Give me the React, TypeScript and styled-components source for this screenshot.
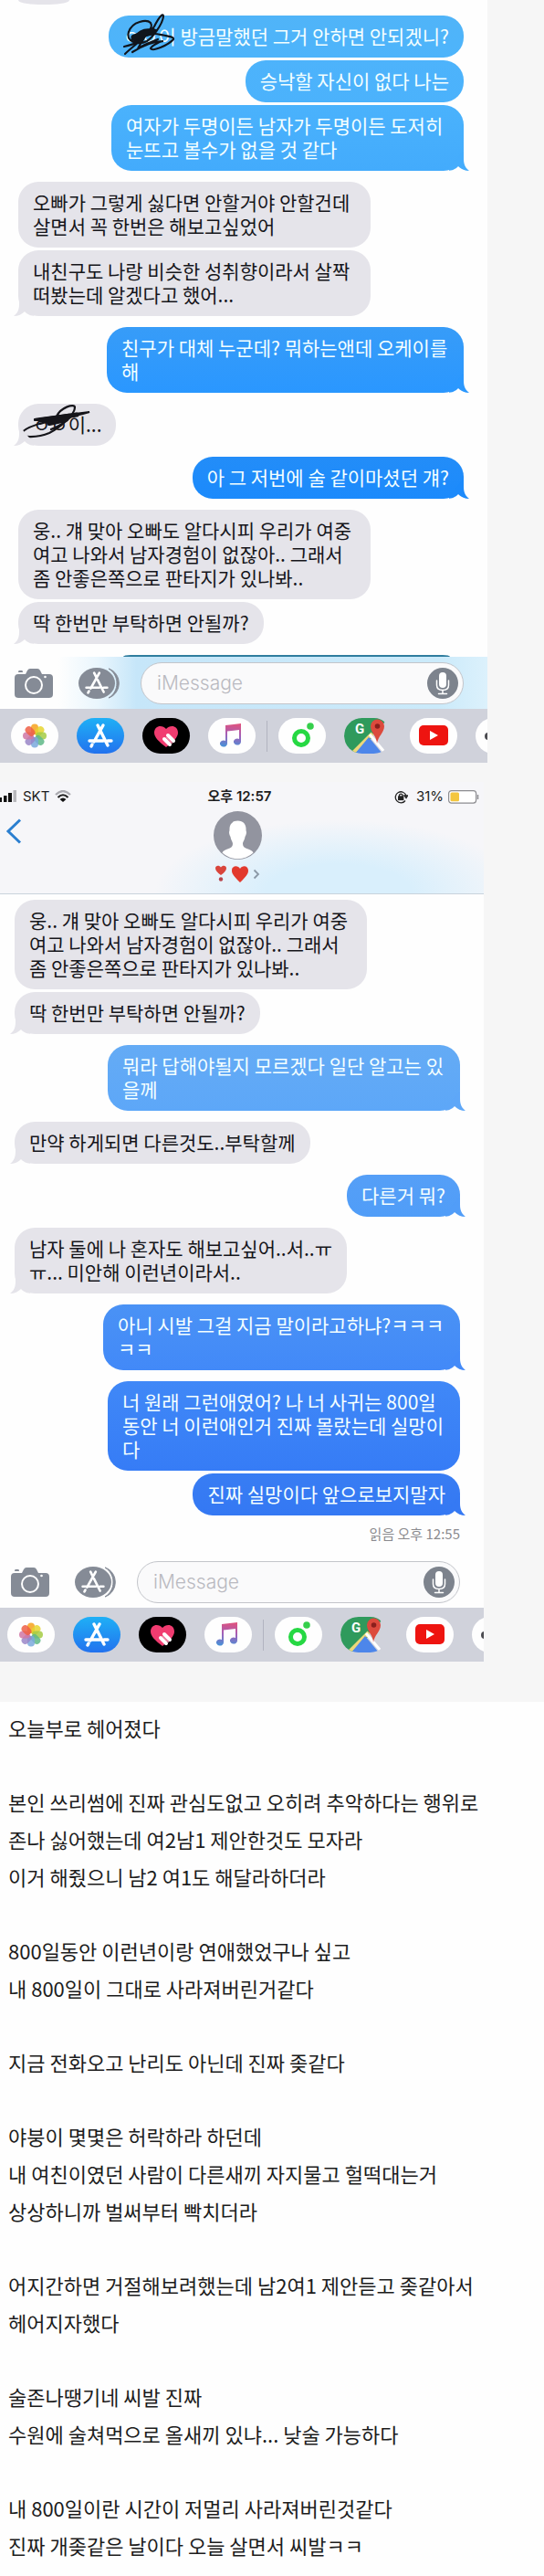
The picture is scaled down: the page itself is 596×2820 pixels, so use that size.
import React from "react";
import styled, { createGlobalStyle } from "styled-components";

const GlobalStyle = createGlobalStyle`
  * { box-sizing: border-box; }
  body { margin: 0; background: #fefefe; }
  body, button, input { font-family: "Noto Sans CJK KR", "Noto Sans", sans-serif; }
  button { border: 0; padding: 0; background: none; display: block; flex: none; }
  svg { display: block; }
`;

const Gallery = styled.section`
  display: flex;
  flex-direction: column;
  gap: 21px;
  padding-bottom: 44px;
  background: #f6f6f6;
`;

const Phone = styled.div<{ $margin: number }>`
  width: calc(100% - ${(p) => p.$margin}px);
  background: #fefefe;
  overflow: hidden;
`;

const Thread = styled.div<{ $top: number; $left: number }>`
  display: flex;
  flex-direction: column;
  align-items: flex-start;
  padding: ${(p) => p.$top}px 26px 0 ${(p) => p.$left}px;
`;

const Group = styled.div<{ $mine?: boolean }>`
  display: flex;
  flex-direction: column;
  gap: 3px;
  align-self: stretch;
  align-items: ${(p) => (p.$mine ? "flex-end" : "flex-start")};
  margin-bottom: 12px;
`;

const Bubble = styled.div<{ $mine?: boolean; $from?: string; $to?: string; $wide?: number }>`
  position: relative;
  min-width: ${(p) => p.$wide ?? 0}px;
  min-height: 46px;
  padding: 9px 16px 11px;
  border-radius: 22px;
  font-size: 21px;
  line-height: 26px;
  white-space: pre-line;
  word-break: keep-all;
  color: ${(p) => (p.$mine ? "#f4ffff" : "#15151a")};
  background: ${(p) => (p.$mine ? `linear-gradient(${p.$from}, ${p.$to})` : "#e5e4ea")};
`;

const TailShape = styled.svg<{ $mine?: boolean }>`
  position: absolute;
  bottom: 0;
  ${(p) => (p.$mine ? "right: -6px;" : "left: -5px; transform: scaleX(-1);")}
`;

const Scribble = styled.svg<{ $x: number; $y: number }>`
  position: absolute;
  left: ${(p) => p.$x}px;
  top: ${(p) => p.$y}px;
`;

const PastEdge = styled.div`
  height: 5px;
  width: 56px;
  margin-bottom: 12px;
  border-radius: 0 0 22px 22px / 0 0 5px 5px;
  background: #e5e4ea;
`;

const NextEdge = styled.div`
  align-self: flex-end;
  width: 358px;
  height: 2px;
  margin-right: 15px;
  border-radius: 8px 8px 0 0 / 2px 2px 0 0;
  background: #2f7d9e;
`;

const Receipt = styled.p`
  align-self: flex-end;
  margin: -2px 0 14px;
  font-size: 15px;
  line-height: 20px;
  color: #8a8a8e;
`;

const Composer = styled.form<{ $tinted?: boolean; $left: number }>`
  display: flex;
  align-items: center;
  height: 57px;
  padding: 0 26px 0 ${(p) => p.$left}px;
  background: ${(p) =>
    p.$tinted
      ? "linear-gradient(90deg, #fefefe 12%, #eaf6fd 20%, #c6e6f9 28%, #cbeafa 90%, #dcf1fc)"
      : "#fefefe"};
`;

const AppToggle = styled.button`
  margin: 0 22px 0 28px;
`;

const Field = styled.label`
  flex: 1;
  min-width: 0;
  display: flex;
  align-items: center;
  height: 46px;
  padding: 0 5px 0 17px;
  border: 1px solid #c3c5ca;
  border-radius: 23px;
  background: #fafafb;
`;

const FieldInput = styled.input`
  flex: 1;
  min-width: 0;
  border: 0;
  padding: 0;
  outline: 0;
  background: none;
  font-family: Inter, sans-serif;
  font-weight: 300;
  font-size: 21px;
  line-height: 26px;
  &::placeholder { color: #b9b9c0; opacity: 1; }
`;

const Drawer = styled.nav<{ $left: number }>`
  display: flex;
  align-items: center;
  gap: 20px;
  height: 59px;
  padding-left: ${(p) => p.$left}px;
  background: #d0d2db;
  overflow: hidden;
`;

const Pill = styled.button<{ $bg?: string }>`
  width: 52px;
  height: 39px;
  border-radius: 20px;
  overflow: hidden;
  background: ${(p) => p.$bg ?? "#fefefe"};
`;

const Divider = styled.span`
  flex: none;
  width: 1px;
  height: 34px;
  margin: 0 -8px;
  background: #b2b4c0;
`;

const Header = styled.header`
  border-bottom: 1px solid #c9d3dc;
  background:
    radial-gradient(ellipse 38% 66% at 70% 100%, #d9effc 40%, #d9effc00),
    #f6f6f9;
`;

const StatusBar = styled.div`
  display: grid;
  grid-template-columns: 1fr auto 1fr;
  align-items: center;
  height: 32px;
  padding-right: 5px;
  font-family: Inter, "Noto Sans CJK KR", sans-serif;
  font-size: 15px;
  line-height: 20px;
  color: #1c1c20;
`;

const Cluster = styled.div<{ $end?: boolean }>`
  display: flex;
  align-items: center;
  gap: ${(p) => (p.$end ? 5 : 6)}px;
  justify-content: ${(p) => (p.$end ? "flex-end" : "flex-start")};
`;

const Clock = styled.time`
  font-size: 15px;
  font-weight: 600;
`;

const TitleBar = styled.div`
  display: grid;
  grid-template-columns: 1fr auto 1fr;
  align-items: start;
  height: 90px;
  padding-right: 10px;
`;

const BackButton = styled.button`
  padding: 8px 0 0 6px;
`;

const Contact = styled.button`
  display: flex;
  flex-direction: column;
  align-items: center;
  gap: 6px;
`;

const Post = styled.article`
  padding: 8px 9px 12px;
  display: flex;
  flex-direction: column;
  gap: 40px;
  font-size: 22px;
  line-height: 41px;
  color: #1c1c1c;
`;

const Paragraph = styled.p`
  margin: 0;
  white-space: pre-line;
`;

const Tail = ({ mine, color = "#e5e4ea" }: { mine?: boolean; color?: string }) => (
  <TailShape $mine={mine} width="22" height="22" viewBox="0 0 22 22" aria-hidden>
    <path
      fill={color}
      d="M16 0V9C16 15 18 19 22 22C17 22 13 20 10 17C7 20 4 22 -4 22L6 12Z"
    />
  </TailShape>
);

const CameraIcon = () => (
  <svg width="42" height="32" viewBox="0 0 42 32">
    <path
      fill="#858b96"
      d="M4 6H12L14 2Q15 0 17 0H25Q27 0 28 2L30 6H38Q42 6 42 10V28Q42 32 38 32H4Q0 32 0 28V10Q0 6 4 6ZM5 2H8Q9 2 9 4H4Q4 2 5 2Z"
    />
    <circle cx="21" cy="18" r="9" fill="none" stroke="#fff" strokeWidth="2" />
    <circle cx="33.500" cy="9" r="1.300" fill="#fff" />
  </svg>
);

const StoreA = ({ stroke = 2.6 }: { stroke?: number }) => (
  <g stroke="#fff" strokeWidth={stroke} strokeLinecap="round" fill="none">
    <path d="M-3-12L8 10M3-12L-7 6M-12 5H3M8 5H12M-9 9L-10 11" />
  </g>
);

const StoreToggleIcon = () => (
  <svg width="46" height="34" viewBox="0 0 46 34">
    <path d="M33 1C48 6 48 28 33 33C45 26 45 8 33 1Z" fill="#858b96" stroke="#858b96" strokeWidth="1" />
    <ellipse cx="20" cy="17" rx="20" ry="17" fill="#858b96" />
    <g transform="translate(20 17) scale(.95)">
      <StoreA stroke={2.8} />
    </g>
  </svg>
);

const MicIcon = () => (
  <svg width="34" height="34" viewBox="0 0 34 34">
    <circle cx="17" cy="17" r="17" fill="#7d838d" />
    <rect x="13" y="5" width="8" height="17" rx="4" fill="#fff" />
    <path d="M10.500 14V19Q10.500 24.500 17 24.500T23.500 19V14M17 25V28M12.500 28.500H21.500" fill="none" stroke="#fff" strokeWidth="1.500" strokeLinecap="round" />
  </svg>
);

const petals = ["#f6a21c", "#e6d52f", "#a5cb44", "#5fb887", "#7aa9dc", "#9a86c8", "#d077a5", "#ee5f45"];

const PhotosIcon = () => (
  <svg width="52" height="39" viewBox="0 0 52 39">
    {petals.map((c, i) => (
      <rect key={c} x="-4" y="-13" width="8" height="12" rx="4" fill={c} opacity=".85" transform={`translate(26 19.500) rotate(${i * 45})`} />
    ))}
    <circle cx="26" cy="19.500" r="1.300" fill="#fff" />
  </svg>
);

const StoreIcon = () => (
  <svg width="52" height="39" viewBox="0 0 52 39">
    <g transform="translate(26 20)">
      <StoreA stroke={3.4} />
    </g>
  </svg>
);

const TouchIcon = () => (
  <svg width="52" height="39" viewBox="0 0 52 39">
    <path d="M26 32C18 26 13 21 13 16C13 8 22 7 26 12C30 7 39 8 39 16C39 21 34 26 26 32Z" fill="#f13c70" />
    <path d="M28 19L34 25M24 23L30 29" stroke="#fff" strokeWidth="4" strokeLinecap="round" />
    <path d="M26 21L33 28" stroke="#e58ba8" strokeWidth="1" />
  </svg>
);

const MusicIcon = ({ id }: { id: string }) => (
  <svg width="52" height="39" viewBox="0 0 52 39">
    <defs>
      <linearGradient id={id} x1="0.600" y1="0" x2="0.500" y2="1">
        <stop offset="0" stopColor="#e0527e" />
        <stop offset=".5" stopColor="#a25fb8" />
        <stop offset="1" stopColor="#4a8fd6" />
      </linearGradient>
    </defs>
    <path
      fill={`url(#${id})`}
      d="M19 8L36 6V26A4 3.500 0 1 1 34 23V13L21 14.500V28A4 3.500 0 1 1 19 25Z"
    />
  </svg>
);

const RingIcon = () => (
  <svg width="52" height="39" viewBox="0 0 52 39">
    <circle cx="25" cy="22" r="7.500" fill="none" stroke="#26d843" strokeWidth="5" />
    <circle cx="35" cy="9" r="3.800" fill="#35cf4b" />
  </svg>
);

const MapIcon = () => (
  <svg width="52" height="39" viewBox="0 0 52 39">
    <path d="M20 0H38Q46 2 46 12L30 22L12 39H9Q0 33 0 20Q0 0 20 0Z" fill="#2f9a5c" />
    <path d="M29 20L45 39H52V0L43 6Z" fill="#d0d2db" />
    <path d="M10 38L31 17" stroke="#ecd77a" strokeWidth="4" />
    <path d="M27 21L42 39H12Z" fill="#4d86ea" />
    <path d="M28 18L44 37" stroke="#fff" strokeWidth="3" />
    <path d="M36 28C36 20 29 16 29 9A7.500 7.500 0 0 1 44 9C44 16 37 20 36 28Z" fill="#dc4a3d" />
    <circle cx="36.500" cy="9" r="2.800" fill="#8a1f1c" />
    <text x="12" y="17" fill="#fff" fontFamily="Roboto, sans-serif" fontWeight="700" fontSize="15">G</text>
  </svg>
);

const VideoIcon = () => (
  <svg width="52" height="39" viewBox="0 0 52 39">
    <rect x="10" y="8" width="32" height="22" rx="5" fill="#ee1410" />
    <path d="M22 14L31 19L22 24Z" fill="#fff" />
  </svg>
);

const MoreIcon = () => (
  <svg width="52" height="39" viewBox="0 0 52 39">
    <circle cx="14" cy="20" r="4" fill="#4b4b50" />
    <circle cx="26" cy="20" r="4" fill="#4b4b50" />
    <circle cx="38" cy="20" r="4" fill="#4b4b50" />
  </svg>
);

const MessageBar = ({ tinted, left, id }: { tinted?: boolean; left: number; id: string }) => (
  <>
    <Composer $tinted={tinted} $left={left} onSubmit={(e) => e.preventDefault()}>
      <button type="button" aria-label="카메라"><CameraIcon /></button>
      <AppToggle type="button" aria-label="앱"><StoreToggleIcon /></AppToggle>
      <Field>
        <FieldInput type="text" placeholder="iMessage" aria-label="iMessage" />
        <button type="button" aria-label="음성"><MicIcon /></button>
      </Field>
    </Composer>
    <Drawer $left={left - 4}>
      <Pill aria-label="사진"><PhotosIcon /></Pill>
      <Pill $bg="linear-gradient(#1fb0f6, #2272ee)" aria-label="App Store"><StoreIcon /></Pill>
      <Pill $bg="#000" aria-label="Digital Touch"><TouchIcon /></Pill>
      <Pill aria-label="음악"><MusicIcon id={id} /></Pill>
      <Divider />
      <Pill aria-label="멜론"><RingIcon /></Pill>
      <Pill $bg="transparent" aria-label="지도"><MapIcon /></Pill>
      <Pill aria-label="YouTube"><VideoIcon /></Pill>
      <Pill aria-label="더 보기"><MoreIcon /></Pill>
    </Drawer>
  </>
);

const SignalIcon = () => (
  <svg width="19" height="14" viewBox="0 0 19 14">
    <path d="M0 8H2V13H0ZM4 6H7.500V13H4ZM9 3H13V13H9Z" fill="#111" />
    <path d="M14.500 0H18V13H14.500Z" fill="#b9b9bd" />
  </svg>
);

const WifiIcon = () => (
  <svg width="18" height="14" viewBox="0 0 18 14" fill="none" strokeWidth="2.200">
    <path d="M1 5Q9-3 17 5" stroke="#aaaab0" />
    <path d="M3.500 8Q9 2.500 14.500 8" stroke="#222" />
    <path d="M9 13L5.500 10Q9 7 12.500 10Z" fill="#111" />
  </svg>
);

const LockIcon = () => (
  <svg width="15" height="15" viewBox="0 0 15 15" fill="none" stroke="#222" strokeWidth="1.300">
    <path d="M12 11.500A6 6 0 1 1 13 6M11 6H14.500L13 8.500Z" />
    <path d="M5.500 7V5.500A1.800 1.800 0 0 1 9 5.500V7" />
    <rect x="4.700" y="7" width="5" height="3.500" fill="#222" />
  </svg>
);

const BatteryIcon = () => (
  <svg width="34" height="15" viewBox="0 0 34 15">
    <rect x=".6" y=".6" width="30" height="13.500" rx="3" fill="#fff" stroke="#8c8c90" strokeWidth="1.200" />
    <rect x="2.500" y="2.500" width="9.500" height="9.700" rx="1.500" fill="#f3c63f" />
    <path d="M32.500 5V10" stroke="#8c8c90" strokeWidth="1.500" />
  </svg>
);

const AvatarIcon = () => (
  <svg width="53" height="53" viewBox="0 0 53 53">
    <circle cx="26.500" cy="26.500" r="26.500" fill="#92949f" />
    <path
      fill="#fff"
      d="M26.500 10.500C33 10.500 36 15 35.500 21C36.800 24 35 27 34.500 28C34 32 32 33 32 36C32 42 42 41 43.500 45.500A25 25 0 0 1 9.500 45.500C11 41 21 42 21 36C21 33 19 32 18.500 28C18 27 16.200 24 17.500 21C17 15 20 10.500 26.500 10.500Z"
    />
  </svg>
);

const ContactName = () => (
  <svg width="50" height="19" viewBox="0 0 50 19">
    <path d="M7 11C3 8 1 6 1 3.500C1 0 5.500 0 7 2.500C8.500 0 13 0 13 3.500C13 6 11 8 7 11Z" fill="#d9453c" />
    <circle cx="7" cy="15.500" r="2.200" fill="#b8434a" />
    <path d="M28 19C22 13 19 10 19 6C19 0 26 0 28 4C30 0 37 0 37 6C37 10 34 13 28 19Z" fill="#e2392d" />
    <path d="M43.500 5.500L48 10L43.500 14.500" fill="none" stroke="#8b98a6" strokeWidth="1.800" />
  </svg>
);

export default function App() {
  return (
    <>
      <GlobalStyle />
      <main>
        <Gallery>
          <Phone $margin={62}>
            <Thread $top={0} $left={20}>
              <PastEdge />
              <Group $mine>
                <Bubble $mine $from="#50b4f8" $to="#4db4fb">
                  ㅇㅇ이 방금말했던 그거 안하면 안되겠니?
                  <Scribble $x={14} $y={-2} width="60" height="48" viewBox="0 0 60 48" fill="none" stroke="#10151c" strokeWidth="2.200" strokeLinecap="round">
                    <path d="M4 44C14 34 30 24 36 14C42 2 46-1 46 3C45 12 34 26 28 30C18 35 4 30 8 20C12 8 28 6 32 10C36 16 24 28 14 30C20 22 30 20 38 22C48 24 58 25 57 28C52 34 34 42 32 38C34 34 44 30 46 30C36 30 22 36 12 42M14 26C20 18 26 16 34 18M10 29C22 26 30 16 38 18M18 26L36 22M3 36C14 34 20 30 24 28L18 38C28 32 36 30 40 28" />
                    <path d="M14 26L34 19" strokeWidth="7" />
                  </Scribble>
                </Bubble>
                <Bubble $mine $from="#4db3fb" $to="#4bb2fc">승낙할 자신이 없다 나는</Bubble>
                <Bubble $mine $wide={386} $from="#4ab2fc" $to="#43abfc">
                  {"여자가 두명이든 남자가 두명이든 도저히\n눈뜨고 볼수가 없을 것 같다"}
                  <Tail mine color="#44acfc" />
                </Bubble>
              </Group>
              <Group>
                <Bubble $wide={386}>{"오빠가 그렇게 싫다면 안할거야 안할건데\n살면서 꼭 한번은 해보고싶었어"}</Bubble>
                <Bubble $wide={386}>
                  {"내친구도 나랑 비슷한 성취향이라서 살짝\n떠봤는데 알겠다고 했어..."}
                  <Tail />
                </Bubble>
              </Group>
              <Group $mine>
                <Bubble $mine $wide={391} $from="#379cf8" $to="#2a97ff">
                  {"친구가 대체 누군데? 뭐하는앤데 오케이를\n해"}
                  <Tail mine color="#2b98fe" />
                </Bubble>
              </Group>
              <Group>
                <Bubble>
                  ㅇㅇ이...
                  <Scribble $x={2} $y={0} width="82" height="40" viewBox="0 0 82 40" fill="none" stroke="#15151a" strokeWidth="2.200" strokeLinecap="round">
                    <path d="M16 17C30 15 50 12 76 9C60 14 30 18 16 18M40 14C44 4 60-1 60 4C60 12 44 26 32 32C20 37 0 38 2 32C6 24 34 18 56 14M22 22C34 18 46 16 58 12M34 28C44 24 52 18 56 14" />
                    <path d="M22 18L62 12" strokeWidth="5" />
                    <path d="M32 21L50 17" strokeWidth="6" />
                  </Scribble>
                  <Tail />
                </Bubble>
              </Group>
              <Group $mine>
                <Bubble $mine $from="#238df8" $to="#1b8afc">
                  아 그 저번에 술 같이마셨던 걔?
                  <Tail mine color="#1c8afb" />
                </Bubble>
              </Group>
              <Group>
                <Bubble $wide={386}>{"웅.. 걔 맞아 오빠도 알다시피 우리가 여중\n여고 나와서 남자경험이 없잖아.. 그래서\n좀 안좋은쪽으로 판타지가 있나봐.."}</Bubble>
                <Bubble>
                  딱 한번만 부탁하면 안될까?
                  <Tail />
                </Bubble>
              </Group>
              <NextEdge />
            </Thread>
            <MessageBar tinted left={16} id="note-a" />
          </Phone>

          <Phone $margin={66}>
            <Header>
              <StatusBar>
                <Cluster>
                  <SignalIcon />
                  <span>SKT</span>
                  <WifiIcon />
                </Cluster>
                <Clock>오후 12:57</Clock>
                <Cluster $end>
                  <LockIcon />
                  <span>&nbsp;31%</span>
                  <BatteryIcon />
                </Cluster>
              </StatusBar>
              <TitleBar>
                <BackButton aria-label="뒤로">
                  <svg width="18" height="28" viewBox="0 0 18 28">
                    <path d="M16 1.500L3 14L16 26.500" fill="none" stroke="#2b7fd0" strokeWidth="3" />
                  </svg>
                </BackButton>
                <Contact aria-label="연락처">
                  <AvatarIcon />
                  <ContactName />
                </Contact>
              </TitleBar>
            </Header>
            <Thread $top={6} $left={16}>
              <Group>
                <Bubble $wide={386}>{"웅.. 걔 맞아 오빠도 알다시피 우리가 여중\n여고 나와서 남자경험이 없잖아.. 그래서\n좀 안좋은쪽으로 판타지가 있나봐.."}</Bubble>
                <Bubble>
                  딱 한번만 부탁하면 안될까?
                  <Tail />
                </Bubble>
              </Group>
              <Group $mine>
                <Bubble $mine $wide={386} $from="#64abf5" $to="#5da7f8">
                  {"뭐라 답해야될지 모르겠다 일단 알고는 있\n을께"}
                  <Tail mine color="#5ea7f8" />
                </Bubble>
              </Group>
              <Group>
                <Bubble>
                  만약 하게되면 다른것도..부탁할께
                  <Tail />
                </Bubble>
              </Group>
              <Group $mine>
                <Bubble $mine $from="#559ff7" $to="#509df8">
                  다른거 뭐?
                  <Tail mine color="#519df8" />
                </Bubble>
              </Group>
              <Group>
                <Bubble>
                  {"남자 둘에 나 혼자도 해보고싶어..서..ㅠ\nㅠ... 미안해 이런년이라서.."}
                  <Tail />
                </Bubble>
              </Group>
              <Group $mine>
                <Bubble $mine $wide={391} $from="#4a92f5" $to="#4289f8">
                  {"아니 시발 그걸 지금 말이라고하냐?ㅋㅋㅋ\nㅋㅋ"}
                  <Tail mine color="#438af8" />
                </Bubble>
              </Group>
              <Group $mine>
                <Bubble $mine $wide={386} $from="#4088f7" $to="#367cf6">
                  {"너 원래 그런애였어? 나 너 사귀는 800일\n동안 너 이런애인거 진짜 몰랐는데 실망이\n다"}
                </Bubble>
                <Bubble $mine $from="#387df3" $to="#3478f3">
                  진짜 실망이다 앞으로보지말자
                  <Tail mine color="#3579f3" />
                </Bubble>
              </Group>
              <Receipt>읽음 오후 12:55</Receipt>
            </Thread>
            <MessageBar left={12} id="note-b" />
          </Phone>
        </Gallery>

        <Post>
          <Paragraph>오늘부로 헤어졌다</Paragraph>
          <Paragraph>{"본인 쓰리썸에 진짜 관심도없고 오히려 추악하다는 행위로\n존나 싫어했는데 여2남1 제안한것도 모자라\n이거 해줬으니 남2 여1도 해달라하더라"}</Paragraph>
          <Paragraph>{"800일동안 이런년이랑 연애했었구나 싶고\n내 800일이 그대로 사라져버린거같다"}</Paragraph>
          <Paragraph>지금 전화오고 난리도 아닌데 진짜 좆같다</Paragraph>
          <Paragraph>{"야붕이 몇몇은 허락하라 하던데\n내 여친이였던 사람이 다른새끼 자지물고 헐떡대는거\n상상하니까 벌써부터 빡치더라"}</Paragraph>
          <Paragraph>{"어지간하면 거절해보려했는데 남2여1 제안듣고 좆같아서\n헤어지자했다"}</Paragraph>
          <Paragraph>{"술존나땡기네 씨발 진짜\n수원에 술쳐먹으로 올새끼 있냐... 낮술 가능하다"}</Paragraph>
          <Paragraph>{"내 800일이란 시간이 저멀리 사라져버린것같다\n진짜 개좆같은 날이다 오늘 살면서 씨발ㅋㅋ"}</Paragraph>
        </Post>
      </main>
    </>
  );
}
